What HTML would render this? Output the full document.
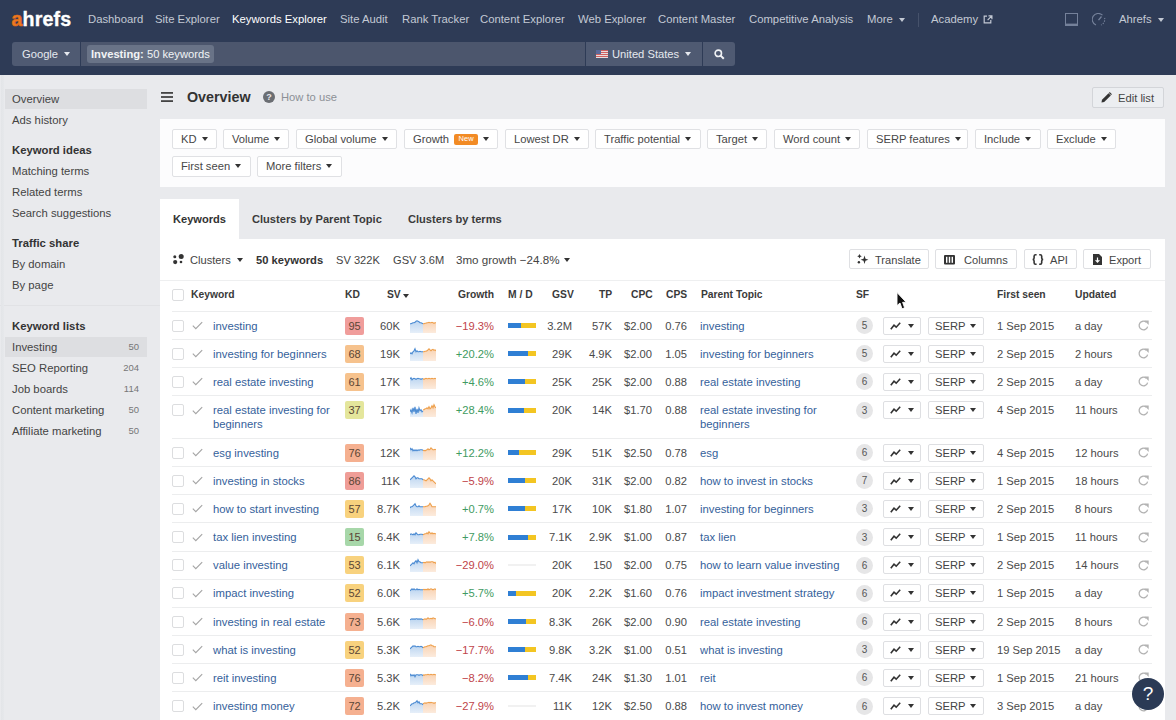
<!DOCTYPE html><html><head><meta charset="utf-8"><style>
*{box-sizing:border-box;margin:0;padding:0}
html,body{width:1176px;height:720px;overflow:hidden}
body{position:relative;background:#e9eaed;font-family:"Liberation Sans",sans-serif;font-size:11.2px;color:#333}
.a{position:absolute;white-space:nowrap}
.ni{position:absolute;top:12.3px;font-size:11.3px;color:#c3c9d4;line-height:14px;white-space:nowrap}
.sb{position:absolute;background:#4f5a72}
.sd{position:absolute;white-space:nowrap;font-size:11.3px;color:#444;line-height:14px;left:12px}
.sd.h{font-weight:bold;color:#333}
.cnt{position:absolute;font-size:9.5px;color:#777;text-align:right;width:40px;left:99px;line-height:14px}
.fb{position:absolute;height:20.6px;border:1px solid #e0e1e4;background:#fff;border-radius:2px;font-size:11.2px;color:#474747;line-height:19.4px;padding-left:8px;white-space:nowrap}
.tri{display:inline-block;width:0;height:0;border-left:3px solid transparent;border-right:3px solid transparent;border-top:4px solid #333;vertical-align:middle;margin-left:5px;position:relative;top:-1px}
.tb{position:absolute;height:20px;border:1px solid #dfe0e3;background:#fff;border-radius:2px;font-size:11.2px;color:#444;line-height:18px;white-space:nowrap}
.th{position:absolute;top:289px;font-size:10.3px;font-weight:bold;color:#3a3a3a;line-height:12px;white-space:nowrap}
.sep{position:absolute;left:172px;width:980px;height:1px;background:#ecedee}
.cb{position:absolute;left:172px;width:12px;height:12px;border:1px solid #dcdddf;border-radius:2px;background:#fff}
.ck{position:absolute;left:192px;width:11px;height:9px}
.kw{position:absolute;left:213px;color:#35619b;font-size:11.3px;line-height:14.2px;white-space:nowrap}
.kd{position:absolute;left:345px;width:19px;height:18px;border-radius:2px;text-align:center;font-size:11px;line-height:18px;color:#5b4636}
.r{position:absolute;text-align:right;font-size:11.2px;color:#4a4a4a;line-height:14px;white-space:nowrap}
.sp{position:absolute;left:410px;width:26px;height:14px}
.md{position:absolute;left:508px;width:28px;height:5px;background:#f3c522}
.md i{position:absolute;left:0;top:0;height:5px;background:#2f7fd4}
.pt{position:absolute;left:700px;color:#35619b;font-size:11.3px;line-height:14.2px;white-space:nowrap}
.sf{position:absolute;left:856px;width:17px;height:17px;border-radius:50%;background:#e6e6e7;text-align:center;font-size:10px;line-height:17px;color:#555}
.cbt{position:absolute;left:883px;width:38px;height:18px;border:1px solid #dedfe2;border-radius:2px;background:#fff}
.serp{position:absolute;left:928px;width:56px;height:18px;border:1px solid #dedfe2;border-radius:2px;background:#fff;font-size:11.2px;color:#444;line-height:16px;padding-left:6px;white-space:nowrap}
.fs{position:absolute;left:997px;font-size:11.2px;color:#4a4a4a;line-height:14px;white-space:nowrap}
.up{position:absolute;left:1075px;font-size:11.2px;color:#4a4a4a;line-height:14px;white-space:nowrap}
.rf{position:absolute;left:1138px;width:11px;height:11px}
</style></head><body>
<div class="a" style="left:0;top:0;width:1176px;height:75px;background:#2e3b56"></div>
<div class="a" style="left:11.5px;top:8px;font-size:19.6px;font-weight:bold;color:#ec7d1f;-webkit-text-stroke:0.7px #e0651c;line-height:22px;letter-spacing:-0.2px">a</div>
<div class="a" style="left:22.5px;top:8px;font-size:19.6px;font-weight:bold;color:#fff;-webkit-text-stroke:0.35px #fff;line-height:22px;letter-spacing:0.2px">hrefs</div>
<div class="ni" style="left:88px">Dashboard</div>
<div class="ni" style="left:155px">Site Explorer</div>
<div class="ni" style="left:232px;color:#fff">Keywords Explorer</div>
<div class="ni" style="left:340px">Site Audit</div>
<div class="ni" style="left:402px">Rank Tracker</div>
<div class="ni" style="left:480px">Content Explorer</div>
<div class="ni" style="left:578px">Web Explorer</div>
<div class="ni" style="left:658px">Content Master</div>
<div class="ni" style="left:749px">Competitive Analysis</div>
<div class="ni" style="left:867px">More</div>
<div class="ni" style="left:931px">Academy</div>
<div class="ni" style="left:1119px">Ahrefs</div>
<div class="a" style="left:899px;top:18px;width:0;height:0;border-left:3px solid transparent;border-right:3px solid transparent;border-top:4px solid #c3c9d4"></div>
<div class="a" style="left:1158px;top:18px;width:0;height:0;border-left:3px solid transparent;border-right:3px solid transparent;border-top:4px solid #c3c9d4"></div>
<div class="a" style="left:918px;top:13px;width:1px;height:14px;background:#46526b"></div>
<svg class="a" style="left:983px;top:15px" width="10" height="9" viewBox="0 0 10 9"><path d="M4 1.2H1.2v6.6h6.6V5" fill="none" stroke="#c3c9d4" stroke-width="1.2"/><path d="M5.5 0.8h3.4v3.4M8.8 0.9L4.6 5.1" fill="none" stroke="#c3c9d4" stroke-width="1.2"/></svg>
<svg class="a" style="left:1065px;top:13px" width="13" height="13" viewBox="0 0 13 13"><rect x="0.5" y="0.5" width="12" height="12" fill="none" stroke="#75819a" stroke-width="1"/><rect x="0.5" y="10.6" width="12" height="1.9" fill="#75819a"/></svg>
<svg class="a" style="left:1092px;top:13px" width="14" height="13" viewBox="0 0 14 13"><path d="M10.5 2.2A6 6 0 1 0 4 12" fill="none" stroke="#75819a" stroke-width="1.1"/><path d="M12.6 5A6 6 0 0 1 9 12" fill="none" stroke="#75819a" stroke-width="1.1" stroke-dasharray="1.2 1.3"/><path d="M6.5 7.2L9.5 3.5" stroke="#75819a" stroke-width="1.3"/></svg>
<div class="sb" style="left:12px;top:42px;width:68px;height:24px;border-radius:3px 0 0 3px"></div>
<div class="sb" style="left:81px;top:42px;width:504px;height:24px;background:#4c566d"></div>
<div class="sb" style="left:586px;top:42px;width:116px;height:24px"></div>
<div class="sb" style="left:703px;top:42px;width:32px;height:24px;border-radius:0 3px 3px 0"></div>
<div class="a" style="left:22px;top:47px;font-size:11.2px;color:#e6e9ef;line-height:14px">Google</div>
<div class="a" style="left:64px;top:52px;width:0;height:0;border-left:3px solid transparent;border-right:3px solid transparent;border-top:4px solid #e6e9ef"></div>
<div class="a" style="left:87px;top:45px;width:127px;height:18px;background:#697387;border-radius:3px"></div>
<div class="a" style="left:91px;top:47px;font-size:11.2px;color:#f1f3f6;line-height:14px"><b>Investing:</b> 50 keywords</div>
<svg class="a" style="left:596px;top:50px" width="12" height="8" viewBox="0 0 12 8"><rect width="12" height="8" fill="#e9dede"/><rect y="0" width="12" height="1" fill="#d06060"/><rect y="2" width="12" height="1" fill="#d06060"/><rect y="4" width="12" height="1" fill="#d06060"/><rect y="6" width="12" height="1" fill="#d06060"/><rect width="5" height="4" fill="#5a6a9a"/></svg>
<div class="a" style="left:612px;top:47px;font-size:11.2px;color:#e6e9ef;line-height:14px">United States</div>
<div class="a" style="left:685px;top:52px;width:0;height:0;border-left:3px solid transparent;border-right:3px solid transparent;border-top:4px solid #e6e9ef"></div>
<svg class="a" style="left:714px;top:49px" width="11" height="11" viewBox="0 0 11 11"><circle cx="4.3" cy="4.3" r="3.2" fill="none" stroke="#f0f2f5" stroke-width="1.6"/><path d="M6.6 6.6L9.8 9.8" stroke="#f0f2f5" stroke-width="2"/></svg>
<div class="a" style="left:5px;top:89px;width:142px;height:20px;background:#dddee1"></div>
<div class="a" style="left:5px;top:337px;width:142px;height:20px;background:#dddee1"></div>
<div class="sd" style="top:92px">Overview</div>
<div class="sd" style="top:113px">Ads history</div>
<div class="sd h" style="top:143px">Keyword ideas</div>
<div class="sd" style="top:164px">Matching terms</div>
<div class="sd" style="top:185px">Related terms</div>
<div class="sd" style="top:206px">Search suggestions</div>
<div class="sd h" style="top:236px">Traffic share</div>
<div class="sd" style="top:257px">By domain</div>
<div class="sd" style="top:278px">By page</div>
<div class="sd h" style="top:319px">Keyword lists</div>
<div class="sd" style="top:340px">Investing</div>
<div class="sd" style="top:361px">SEO Reporting</div>
<div class="sd" style="top:382px">Job boards</div>
<div class="sd" style="top:403px">Content marketing</div>
<div class="sd" style="top:424px">Affiliate marketing</div>
<div class="cnt" style="top:340px">50</div>
<div class="cnt" style="top:361px">204</div>
<div class="cnt" style="top:382px">114</div>
<div class="cnt" style="top:403px">50</div>
<div class="cnt" style="top:424px">50</div>
<div class="a" style="left:0;top:305px;width:160px;height:1px;background:#e1e2e5"></div>
<div class="a" style="left:1px;top:75px;width:3px;height:645px;background:linear-gradient(90deg,#e3e5e8,#e6e8eb)"></div>
<svg class="a" style="left:161px;top:92px" width="12" height="10" viewBox="0 0 12 10"><rect y="0" width="12" height="1.8" fill="#444"/><rect y="4.1" width="12" height="1.8" fill="#444"/><rect y="8.2" width="12" height="1.8" fill="#444"/></svg>
<div class="a" style="left:187px;top:89px;font-size:14.3px;font-weight:bold;color:#333;line-height:17px">Overview</div>
<div class="a" style="left:263px;top:91px;width:12px;height:12px;border-radius:50%;background:#6b6e73;color:#e9eaed;font-size:9px;font-weight:bold;text-align:center;line-height:12px">?</div>
<div class="a" style="left:281px;top:90px;font-size:11.2px;color:#8c9096;line-height:14px">How to use</div>
<div class="a" style="left:1092px;top:87px;width:72px;height:21px;border:1px solid #d3d5d9;border-radius:2px;background:#eceef1"></div>
<svg class="a" style="left:1101px;top:92px" width="11" height="11" viewBox="0 0 11 11"><path d="M0.5 10.5L1 7.8L7.6 1.2L9.8 3.4L3.2 10Z" fill="#333"/><path d="M8.3 0.5L10.5 2.7" stroke="#333" stroke-width="1.2"/></svg>
<div class="a" style="left:1118px;top:91px;font-size:11.2px;color:#444;line-height:14px">Edit list</div>
<div class="a" style="left:160px;top:119px;width:1005px;height:68px;background:#fcfcfd"></div>
<div class="fb" style="left:172px;top:128.7px;width:45px">KD<span class="tri"></span></div>
<div class="fb" style="left:223px;top:128.7px;width:66px">Volume<span class="tri"></span></div>
<div class="fb" style="left:296px;top:128.7px;width:101px">Global volume<span class="tri"></span></div>
<div class="fb" style="left:404px;top:128.7px;width:94px">Growth<span style="display:inline-block;width:24px;height:10.5px;margin-left:5px;background:#f28b25;color:#fff;font-size:7.5px;line-height:10.5px;text-align:center;border-radius:2px;vertical-align:1.5px">New</span><span class="tri"></span></div>
<div class="fb" style="left:505px;top:128.7px;width:84px">Lowest DR<span class="tri"></span></div>
<div class="fb" style="left:595px;top:128.7px;width:106px">Traffic potential<span class="tri"></span></div>
<div class="fb" style="left:707px;top:128.7px;width:60px">Target<span class="tri"></span></div>
<div class="fb" style="left:774px;top:128.7px;width:86px">Word count<span class="tri"></span></div>
<div class="fb" style="left:867px;top:128.7px;width:101px">SERP features<span class="tri"></span></div>
<div class="fb" style="left:975px;top:128.7px;width:66px">Include<span class="tri"></span></div>
<div class="fb" style="left:1047px;top:128.7px;width:69px">Exclude<span class="tri"></span></div>
<div class="fb" style="left:172px;top:156.2px;width:79px">First seen<span class="tri"></span></div>
<div class="fb" style="left:257px;top:156.2px;width:85px">More filters<span class="tri"></span></div>
<div class="a" style="left:160px;top:199px;width:79px;height:41px;background:#fff"></div>
<div class="a" style="left:173px;top:212px;font-size:11.1px;font-weight:bold;color:#333;line-height:14px">Keywords</div>
<div class="a" style="left:252px;top:212px;font-size:11.1px;font-weight:bold;color:#3b3b3b;line-height:14px">Clusters by Parent Topic</div>
<div class="a" style="left:408px;top:212px;font-size:11.1px;font-weight:bold;color:#3b3b3b;line-height:14px">Clusters by terms</div>
<div class="a" style="left:160px;top:239px;width:1005px;height:481px;background:#fff"></div>
<svg class="a" style="left:173px;top:254px" width="11" height="11" viewBox="0 0 11 11"><circle cx="1.8" cy="2.7" r="1.5" fill="#333"/><circle cx="8.2" cy="2.6" r="2.5" fill="#333"/><circle cx="2.2" cy="8.1" r="2.1" fill="#333"/><circle cx="8.0" cy="8.0" r="1.3" fill="#333"/></svg>
<div class="a" style="left:190px;top:253px;font-size:11.1px;color:#444;line-height:14px">Clusters</div>
<div class="a" style="left:237px;top:258px;width:0;height:0;border-left:3px solid transparent;border-right:3px solid transparent;border-top:4px solid #333"></div>
<div class="a" style="left:256px;top:253px;font-size:11.2px;font-weight:bold;color:#333;line-height:14px">50 keywords</div>
<div class="a" style="left:336px;top:253px;font-size:11.1px;color:#444;line-height:14px">SV 322K</div>
<div class="a" style="left:393px;top:253px;font-size:11.1px;color:#444;line-height:14px">GSV 3.6M</div>
<div class="a" style="left:456px;top:253px;font-size:11.6px;color:#444;line-height:14px">3mo growth −24.8%</div>
<div class="a" style="left:564px;top:258px;width:0;height:0;border-left:3px solid transparent;border-right:3px solid transparent;border-top:4px solid #333"></div>
<div class="tb" style="left:849px;top:249px;width:80px"></div>
<div class="a" style="left:875px;top:253px;font-size:11.1px;color:#444;line-height:14px">Translate</div>
<div class="tb" style="left:935px;top:249px;width:82px"></div>
<div class="a" style="left:964px;top:253px;font-size:11.1px;color:#444;line-height:14px">Columns</div>
<div class="tb" style="left:1024px;top:249px;width:53px"></div>
<div class="a" style="left:1050px;top:253px;font-size:11.1px;color:#444;line-height:14px">API</div>
<div class="tb" style="left:1083px;top:249px;width:68px"></div>
<div class="a" style="left:1109px;top:253px;font-size:11.1px;color:#444;line-height:14px">Export</div>
<svg class="a" style="left:857px;top:254px" width="13" height="12" viewBox="0 0 13 12"><path d="M2.50 -0.05 L3.25 1.50 L4.80 2.25 L3.25 3.00 L2.50 4.55 L1.75 3.00 L0.20 2.25 L1.75 1.50 Z" fill="#333"/><path d="M7.50 1.40 L8.50 4.70 L11.40 5.70 L8.50 6.70 L7.50 10.00 L6.50 6.70 L3.60 5.70 L6.50 4.70 Z" fill="#333"/><circle cx="1.9" cy="8.2" r="1.2" fill="#333"/></svg>
<svg class="a" style="left:944px;top:254.5px" width="11" height="10" viewBox="0 0 11 10"><rect x="0" y="0" width="11" height="9.5" rx="1" fill="#333"/><rect x="2" y="1.8" width="1.4" height="6" fill="#fff"/><rect x="4.8" y="1.8" width="1.4" height="6" fill="#fff"/><rect x="7.6" y="1.8" width="1.4" height="6" fill="#fff"/></svg>
<svg class="a" style="left:1032px;top:254px" width="12" height="11" viewBox="0 0 12 11"><path d="M4.6 0.8H3.6Q2.1 0.8 2.1 2.3V4Q2.1 5.5 0.6 5.5Q2.1 5.5 2.1 7V8.7Q2.1 10.2 3.6 10.2H4.6M7.2 0.8H8.2Q9.7 0.8 9.7 2.3V4Q9.7 5.5 11.2 5.5Q9.7 5.5 9.7 7V8.7Q9.7 10.2 8.2 10.2H7.2" fill="none" stroke="#333" stroke-width="1.6"/></svg>
<svg class="a" style="left:1093px;top:254px" width="9" height="11" viewBox="0 0 9 11"><path d="M0 0H6L9 3V11H0Z" fill="#333"/><path d="M4.5 3.5V8M2.6 6.2L4.5 8.2L6.4 6.2" fill="none" stroke="#fff" stroke-width="1.2"/></svg>
<div class="sep" style="top:280px;left:160px;width:1005px;background:#eeeff0"></div>
<div class="cb" style="top:289px"></div>
<div class="th" style="left:191px">Keyword</div>
<div class="th" style="left:345px">KD</div>
<div class="th" style="left:387px">SV</div>
<div class="th" style="left:458px">Growth</div>
<div class="th" style="left:508px">M / D</div>
<div class="th" style="left:552px">GSV</div>
<div class="th" style="left:599px">TP</div>
<div class="th" style="left:631px">CPC</div>
<div class="th" style="left:666px">CPS</div>
<div class="th" style="left:701px">Parent Topic</div>
<div class="th" style="left:856px">SF</div>
<div class="th" style="left:997px">First seen</div>
<div class="th" style="left:1075px">Updated</div>
<div class="a" style="left:403px;top:294px;width:0;height:0;border-left:3px solid transparent;border-right:3px solid transparent;border-top:4px solid #333"></div>
<div class="sep" style="top:311px"></div>
<svg width="0" height="0" style="position:absolute"><defs><linearGradient id="gb" x1="0" y1="0" x2="0" y2="1"><stop offset="0" stop-color="#bcd5f0"/><stop offset="1" stop-color="#e6eff9"/></linearGradient><linearGradient id="go" x1="0" y1="0" x2="0" y2="1"><stop offset="0" stop-color="#f9d3b3"/><stop offset="1" stop-color="#fcebdd"/></linearGradient></defs></svg>
<div class="cb" style="top:319.6px"></div>
<svg class="ck" style="top:321.1px" viewBox="0 0 11 9"><path d="M0.8 4.6L3.8 7.6L10.2 1.2" fill="none" stroke="#a5a5a5" stroke-width="1.15"/></svg>
<div class="kw" style="top:318.6px">investing</div>
<div class="kd" style="top:316.6px;background:#f09d9b">95</div>
<div class="r" style="left:360px;width:40px;top:318.6px">60K</div>
<svg class="sp" style="top:318.6px" width="26" height="14" viewBox="0 0 26 14"><path d="M0.0 4.8 L1.0 4.8 L2.0 4.3 L3.0 3.8 L4.0 3.8 L5.0 3.3 L6.0 2.3 L7.0 1.8 L8.0 2.3 L9.0 2.8 L10.0 3.8 L11.0 3.8 L12.0 4.3 L13.0 4.8 L13.0 14 L0.0 14Z" fill="url(#gb)"/><path d="M13.0 4.8 L14.0 4.8 L15.0 4.3 L16.0 4.3 L17.0 3.8 L18.0 3.8 L19.0 3.3 L20.0 3.8 L21.0 3.8 L22.0 3.3 L23.0 3.8 L24.0 4.3 L25.0 3.8 L26.0 3.8 L26.0 14 L13.0 14Z" fill="url(#go)"/><path d="M0.0 4.8 L1.0 4.8 L2.0 4.3 L3.0 3.8 L4.0 3.8 L5.0 3.3 L6.0 2.3 L7.0 1.8 L8.0 2.3 L9.0 2.8 L10.0 3.8 L11.0 3.8 L12.0 4.3 L13.0 4.8" fill="none" stroke="#4a8ad2" stroke-width="1.1"/><path d="M13.0 4.8 L14.0 4.8 L15.0 4.3 L16.0 4.3 L17.0 3.8 L18.0 3.8 L19.0 3.3 L20.0 3.8 L21.0 3.8 L22.0 3.3 L23.0 3.8 L24.0 4.3 L25.0 3.8 L26.0 3.8" fill="none" stroke="#eea04c" stroke-width="1.1"/></svg>
<div class="r" style="left:440px;width:54px;top:318.6px;color:#c0444a">−19.3%</div>
<div class="md" style="top:323.1px"><i style="width:13.2px"></i></div>
<div class="r" style="left:532px;width:40px;top:318.6px">3.2M</div>
<div class="r" style="left:572px;width:40px;top:318.6px">57K</div>
<div class="r" style="left:612px;width:40px;top:318.6px">$2.00</div>
<div class="r" style="left:647px;width:40px;top:318.6px">0.76</div>
<div class="pt" style="top:318.6px">investing</div>
<div class="sf" style="top:317.1px">5</div>
<div class="cbt" style="top:316.6px"><svg style="position:absolute;left:6px;top:4px" width="11" height="8" viewBox="0 0 11 8"><path d="M0.8 7.2L4 3.2L6.2 5.2L10.2 0.8" fill="none" stroke="#333" stroke-width="1.6"/></svg><div style="position:absolute;left:24px;top:6px;width:0;height:0;border-left:3px solid transparent;border-right:3px solid transparent;border-top:4px solid #333"></div></div>
<div class="serp" style="top:316.6px">SERP<div style="position:absolute;left:41px;top:6px;width:0;height:0;border-left:3px solid transparent;border-right:3px solid transparent;border-top:4px solid #333"></div></div>
<div class="fs" style="top:318.6px">1 Sep 2015</div>
<div class="up" style="top:318.6px">a day</div>
<svg class="rf" style="top:320.1px" viewBox="0 0 11 11"><path d="M9.6 6.6A4.3 4.3 0 1 1 8.3 2.3" fill="none" stroke="#b3b3b3" stroke-width="1.3"/><path d="M6.3 0.6L10.7 0.6L10.7 5Z" fill="#b3b3b3"/></svg>
<div class="sep" style="top:339.0px"></div>
<div class="cb" style="top:347.8px"></div>
<svg class="ck" style="top:349.3px" viewBox="0 0 11 9"><path d="M0.8 4.6L3.8 7.6L10.2 1.2" fill="none" stroke="#a5a5a5" stroke-width="1.15"/></svg>
<div class="kw" style="top:346.8px">investing for beginners</div>
<div class="kd" style="top:344.8px;background:#f6c28d">68</div>
<div class="r" style="left:360px;width:40px;top:346.8px">19K</div>
<svg class="sp" style="top:346.8px" width="26" height="14" viewBox="0 0 26 14"><path d="M0.0 6.8 L1.0 5.8 L2.0 6.8 L3.0 4.8 L4.0 3.8 L5.0 1.8 L6.0 4.8 L7.0 3.8 L8.0 4.8 L9.0 4.8 L10.0 4.3 L11.0 4.8 L12.0 4.8 L13.0 4.8 L13.0 14 L0.0 14Z" fill="url(#gb)"/><path d="M13.0 4.8 L14.0 4.8 L15.0 4.3 L16.0 4.3 L17.0 3.8 L18.0 2.8 L19.0 1.8 L20.0 2.8 L21.0 3.8 L22.0 2.8 L23.0 2.3 L24.0 3.3 L25.0 2.8 L26.0 3.8 L26.0 14 L13.0 14Z" fill="url(#go)"/><path d="M0.0 6.8 L1.0 5.8 L2.0 6.8 L3.0 4.8 L4.0 3.8 L5.0 1.8 L6.0 4.8 L7.0 3.8 L8.0 4.8 L9.0 4.8 L10.0 4.3 L11.0 4.8 L12.0 4.8 L13.0 4.8" fill="none" stroke="#4a8ad2" stroke-width="1.1"/><path d="M13.0 4.8 L14.0 4.8 L15.0 4.3 L16.0 4.3 L17.0 3.8 L18.0 2.8 L19.0 1.8 L20.0 2.8 L21.0 3.8 L22.0 2.8 L23.0 2.3 L24.0 3.3 L25.0 2.8 L26.0 3.8" fill="none" stroke="#eea04c" stroke-width="1.1"/></svg>
<div class="r" style="left:440px;width:54px;top:346.8px;color:#3f9b62">+20.2%</div>
<div class="md" style="top:351.3px"><i style="width:20.4px"></i></div>
<div class="r" style="left:532px;width:40px;top:346.8px">29K</div>
<div class="r" style="left:572px;width:40px;top:346.8px">4.9K</div>
<div class="r" style="left:612px;width:40px;top:346.8px">$2.00</div>
<div class="r" style="left:647px;width:40px;top:346.8px">1.05</div>
<div class="pt" style="top:346.8px">investing for beginners</div>
<div class="sf" style="top:345.3px">5</div>
<div class="cbt" style="top:344.8px"><svg style="position:absolute;left:6px;top:4px" width="11" height="8" viewBox="0 0 11 8"><path d="M0.8 7.2L4 3.2L6.2 5.2L10.2 0.8" fill="none" stroke="#333" stroke-width="1.6"/></svg><div style="position:absolute;left:24px;top:6px;width:0;height:0;border-left:3px solid transparent;border-right:3px solid transparent;border-top:4px solid #333"></div></div>
<div class="serp" style="top:344.8px">SERP<div style="position:absolute;left:41px;top:6px;width:0;height:0;border-left:3px solid transparent;border-right:3px solid transparent;border-top:4px solid #333"></div></div>
<div class="fs" style="top:346.8px">2 Sep 2015</div>
<div class="up" style="top:346.8px">2 hours</div>
<svg class="rf" style="top:348.3px" viewBox="0 0 11 11"><path d="M9.6 6.6A4.3 4.3 0 1 1 8.3 2.3" fill="none" stroke="#b3b3b3" stroke-width="1.3"/><path d="M6.3 0.6L10.7 0.6L10.7 5Z" fill="#b3b3b3"/></svg>
<div class="sep" style="top:367.1px"></div>
<div class="cb" style="top:375.9px"></div>
<svg class="ck" style="top:377.4px" viewBox="0 0 11 9"><path d="M0.8 4.6L3.8 7.6L10.2 1.2" fill="none" stroke="#a5a5a5" stroke-width="1.15"/></svg>
<div class="kw" style="top:374.9px">real estate investing</div>
<div class="kd" style="top:372.9px;background:#f6c28d">61</div>
<div class="r" style="left:360px;width:40px;top:374.9px">17K</div>
<svg class="sp" style="top:374.9px" width="26" height="14" viewBox="0 0 26 14"><path d="M0.0 3.8 L1.0 2.8 L2.0 4.8 L3.0 3.8 L4.0 3.3 L5.0 3.8 L6.0 4.3 L7.0 3.8 L8.0 3.3 L9.0 3.8 L10.0 3.8 L11.0 4.3 L12.0 3.8 L13.0 3.8 L13.0 14 L0.0 14Z" fill="url(#gb)"/><path d="M13.0 3.8 L14.0 4.3 L15.0 3.8 L16.0 3.3 L17.0 3.8 L18.0 3.8 L19.0 3.3 L20.0 3.8 L21.0 3.8 L22.0 3.3 L23.0 3.8 L24.0 3.8 L25.0 3.3 L26.0 3.8 L26.0 14 L13.0 14Z" fill="url(#go)"/><path d="M0.0 3.8 L1.0 2.8 L2.0 4.8 L3.0 3.8 L4.0 3.3 L5.0 3.8 L6.0 4.3 L7.0 3.8 L8.0 3.3 L9.0 3.8 L10.0 3.8 L11.0 4.3 L12.0 3.8 L13.0 3.8" fill="none" stroke="#4a8ad2" stroke-width="1.1"/><path d="M13.0 3.8 L14.0 4.3 L15.0 3.8 L16.0 3.3 L17.0 3.8 L18.0 3.8 L19.0 3.3 L20.0 3.8 L21.0 3.8 L22.0 3.3 L23.0 3.8 L24.0 3.8 L25.0 3.3 L26.0 3.8" fill="none" stroke="#eea04c" stroke-width="1.1"/></svg>
<div class="r" style="left:440px;width:54px;top:374.9px;color:#3f9b62">+4.6%</div>
<div class="md" style="top:379.4px"><i style="width:16.8px"></i></div>
<div class="r" style="left:532px;width:40px;top:374.9px">25K</div>
<div class="r" style="left:572px;width:40px;top:374.9px">25K</div>
<div class="r" style="left:612px;width:40px;top:374.9px">$2.00</div>
<div class="r" style="left:647px;width:40px;top:374.9px">0.88</div>
<div class="pt" style="top:374.9px">real estate investing</div>
<div class="sf" style="top:373.4px">6</div>
<div class="cbt" style="top:372.9px"><svg style="position:absolute;left:6px;top:4px" width="11" height="8" viewBox="0 0 11 8"><path d="M0.8 7.2L4 3.2L6.2 5.2L10.2 0.8" fill="none" stroke="#333" stroke-width="1.6"/></svg><div style="position:absolute;left:24px;top:6px;width:0;height:0;border-left:3px solid transparent;border-right:3px solid transparent;border-top:4px solid #333"></div></div>
<div class="serp" style="top:372.9px">SERP<div style="position:absolute;left:41px;top:6px;width:0;height:0;border-left:3px solid transparent;border-right:3px solid transparent;border-top:4px solid #333"></div></div>
<div class="fs" style="top:374.9px">2 Sep 2015</div>
<div class="up" style="top:374.9px">a day</div>
<svg class="rf" style="top:376.4px" viewBox="0 0 11 11"><path d="M9.6 6.6A4.3 4.3 0 1 1 8.3 2.3" fill="none" stroke="#b3b3b3" stroke-width="1.3"/><path d="M6.3 0.6L10.7 0.6L10.7 5Z" fill="#b3b3b3"/></svg>
<div class="sep" style="top:395.3px"></div>
<div class="cb" style="top:404.1px"></div>
<svg class="ck" style="top:405.6px" viewBox="0 0 11 9"><path d="M0.8 4.6L3.8 7.6L10.2 1.2" fill="none" stroke="#a5a5a5" stroke-width="1.15"/></svg>
<div class="kw" style="top:403.1px">real estate investing for<br>beginners</div>
<div class="kd" style="top:401.1px;background:#e4e69c">37</div>
<div class="r" style="left:360px;width:40px;top:403.1px">17K</div>
<svg class="sp" style="top:403.1px" width="26" height="14" viewBox="0 0 26 14"><path d="M0.0 8.8 L1.0 6.8 L2.0 9.8 L3.0 4.8 L4.0 8.8 L5.0 3.8 L6.0 10.8 L7.0 5.8 L8.0 9.8 L9.0 4.8 L10.0 7.8 L11.0 6.8 L12.0 8.8 L13.0 7.8 L13.0 14 L0.0 14Z" fill="url(#gb)"/><path d="M13.0 6.8 L14.0 6.8 L15.0 5.8 L16.0 5.8 L17.0 4.8 L18.0 5.8 L19.0 3.8 L20.0 5.8 L21.0 4.8 L22.0 2.8 L23.0 4.8 L24.0 1.8 L25.0 3.8 L26.0 4.8 L26.0 14 L13.0 14Z" fill="url(#go)"/><path d="M0.0 8.8 L1.0 6.8 L2.0 9.8 L3.0 4.8 L4.0 8.8 L5.0 3.8 L6.0 10.8 L7.0 5.8 L8.0 9.8 L9.0 4.8 L10.0 7.8 L11.0 6.8 L12.0 8.8 L13.0 7.8" fill="none" stroke="#4a8ad2" stroke-width="1.1"/><path d="M13.0 6.8 L14.0 6.8 L15.0 5.8 L16.0 5.8 L17.0 4.8 L18.0 5.8 L19.0 3.8 L20.0 5.8 L21.0 4.8 L22.0 2.8 L23.0 4.8 L24.0 1.8 L25.0 3.8 L26.0 4.8" fill="none" stroke="#eea04c" stroke-width="1.1"/></svg>
<div class="r" style="left:440px;width:54px;top:403.1px;color:#3f9b62">+28.4%</div>
<div class="md" style="top:407.6px"><i style="width:16.0px"></i></div>
<div class="r" style="left:532px;width:40px;top:403.1px">20K</div>
<div class="r" style="left:572px;width:40px;top:403.1px">14K</div>
<div class="r" style="left:612px;width:40px;top:403.1px">$1.70</div>
<div class="r" style="left:647px;width:40px;top:403.1px">0.88</div>
<div class="pt" style="top:403.1px">real estate investing for<br>beginners</div>
<div class="sf" style="top:401.6px">3</div>
<div class="cbt" style="top:401.1px"><svg style="position:absolute;left:6px;top:4px" width="11" height="8" viewBox="0 0 11 8"><path d="M0.8 7.2L4 3.2L6.2 5.2L10.2 0.8" fill="none" stroke="#333" stroke-width="1.6"/></svg><div style="position:absolute;left:24px;top:6px;width:0;height:0;border-left:3px solid transparent;border-right:3px solid transparent;border-top:4px solid #333"></div></div>
<div class="serp" style="top:401.1px">SERP<div style="position:absolute;left:41px;top:6px;width:0;height:0;border-left:3px solid transparent;border-right:3px solid transparent;border-top:4px solid #333"></div></div>
<div class="fs" style="top:403.1px">4 Sep 2015</div>
<div class="up" style="top:403.1px">11 hours</div>
<svg class="rf" style="top:404.6px" viewBox="0 0 11 11"><path d="M9.6 6.6A4.3 4.3 0 1 1 8.3 2.3" fill="none" stroke="#b3b3b3" stroke-width="1.3"/><path d="M6.3 0.6L10.7 0.6L10.7 5Z" fill="#b3b3b3"/></svg>
<div class="sep" style="top:437.8px"></div>
<div class="cb" style="top:446.6px"></div>
<svg class="ck" style="top:448.1px" viewBox="0 0 11 9"><path d="M0.8 4.6L3.8 7.6L10.2 1.2" fill="none" stroke="#a5a5a5" stroke-width="1.15"/></svg>
<div class="kw" style="top:445.6px">esg investing</div>
<div class="kd" style="top:443.6px;background:#f5b090">76</div>
<div class="r" style="left:360px;width:40px;top:445.6px">12K</div>
<svg class="sp" style="top:445.6px" width="26" height="14" viewBox="0 0 26 14"><path d="M0.0 1.8 L1.0 3.8 L2.0 2.8 L3.0 4.8 L4.0 3.8 L5.0 4.8 L6.0 3.8 L7.0 4.8 L8.0 3.8 L9.0 4.3 L10.0 3.8 L11.0 3.8 L12.0 3.8 L13.0 4.3 L13.0 14 L0.0 14Z" fill="url(#gb)"/><path d="M13.0 4.8 L14.0 4.3 L15.0 4.8 L16.0 4.3 L17.0 3.8 L18.0 2.8 L19.0 3.8 L20.0 3.3 L21.0 1.8 L22.0 2.8 L23.0 3.8 L24.0 3.8 L25.0 3.3 L26.0 3.8 L26.0 14 L13.0 14Z" fill="url(#go)"/><path d="M0.0 1.8 L1.0 3.8 L2.0 2.8 L3.0 4.8 L4.0 3.8 L5.0 4.8 L6.0 3.8 L7.0 4.8 L8.0 3.8 L9.0 4.3 L10.0 3.8 L11.0 3.8 L12.0 3.8 L13.0 4.3" fill="none" stroke="#4a8ad2" stroke-width="1.1"/><path d="M13.0 4.8 L14.0 4.3 L15.0 4.8 L16.0 4.3 L17.0 3.8 L18.0 2.8 L19.0 3.8 L20.0 3.3 L21.0 1.8 L22.0 2.8 L23.0 3.8 L24.0 3.8 L25.0 3.3 L26.0 3.8" fill="none" stroke="#eea04c" stroke-width="1.1"/></svg>
<div class="r" style="left:440px;width:54px;top:445.6px;color:#3f9b62">+12.2%</div>
<div class="md" style="top:450.1px"><i style="width:10.9px"></i></div>
<div class="r" style="left:532px;width:40px;top:445.6px">29K</div>
<div class="r" style="left:572px;width:40px;top:445.6px">51K</div>
<div class="r" style="left:612px;width:40px;top:445.6px">$2.50</div>
<div class="r" style="left:647px;width:40px;top:445.6px">0.78</div>
<div class="pt" style="top:445.6px">esg</div>
<div class="sf" style="top:444.1px">6</div>
<div class="cbt" style="top:443.6px"><svg style="position:absolute;left:6px;top:4px" width="11" height="8" viewBox="0 0 11 8"><path d="M0.8 7.2L4 3.2L6.2 5.2L10.2 0.8" fill="none" stroke="#333" stroke-width="1.6"/></svg><div style="position:absolute;left:24px;top:6px;width:0;height:0;border-left:3px solid transparent;border-right:3px solid transparent;border-top:4px solid #333"></div></div>
<div class="serp" style="top:443.6px">SERP<div style="position:absolute;left:41px;top:6px;width:0;height:0;border-left:3px solid transparent;border-right:3px solid transparent;border-top:4px solid #333"></div></div>
<div class="fs" style="top:445.6px">4 Sep 2015</div>
<div class="up" style="top:445.6px">12 hours</div>
<svg class="rf" style="top:447.1px" viewBox="0 0 11 11"><path d="M9.6 6.6A4.3 4.3 0 1 1 8.3 2.3" fill="none" stroke="#b3b3b3" stroke-width="1.3"/><path d="M6.3 0.6L10.7 0.6L10.7 5Z" fill="#b3b3b3"/></svg>
<div class="sep" style="top:466.0px"></div>
<div class="cb" style="top:474.7px"></div>
<svg class="ck" style="top:476.2px" viewBox="0 0 11 9"><path d="M0.8 4.6L3.8 7.6L10.2 1.2" fill="none" stroke="#a5a5a5" stroke-width="1.15"/></svg>
<div class="kw" style="top:473.7px">investing in stocks</div>
<div class="kd" style="top:471.7px;background:#ef9d97">86</div>
<div class="r" style="left:360px;width:40px;top:473.7px">11K</div>
<svg class="sp" style="top:473.7px" width="26" height="14" viewBox="0 0 26 14"><path d="M0.0 5.8 L1.0 4.8 L2.0 3.8 L3.0 2.8 L4.0 1.8 L5.0 2.8 L6.0 4.8 L7.0 3.8 L8.0 3.8 L9.0 4.8 L10.0 4.8 L11.0 4.8 L12.0 4.8 L13.0 5.8 L13.0 14 L0.0 14Z" fill="url(#gb)"/><path d="M13.0 5.8 L14.0 5.8 L15.0 6.3 L16.0 6.8 L17.0 5.8 L18.0 4.8 L19.0 3.8 L20.0 4.8 L21.0 6.8 L22.0 5.8 L23.0 6.8 L24.0 7.8 L25.0 8.8 L26.0 9.8 L26.0 14 L13.0 14Z" fill="url(#go)"/><path d="M0.0 5.8 L1.0 4.8 L2.0 3.8 L3.0 2.8 L4.0 1.8 L5.0 2.8 L6.0 4.8 L7.0 3.8 L8.0 3.8 L9.0 4.8 L10.0 4.8 L11.0 4.8 L12.0 4.8 L13.0 5.8" fill="none" stroke="#4a8ad2" stroke-width="1.1"/><path d="M13.0 5.8 L14.0 5.8 L15.0 6.3 L16.0 6.8 L17.0 5.8 L18.0 4.8 L19.0 3.8 L20.0 4.8 L21.0 6.8 L22.0 5.8 L23.0 6.8 L24.0 7.8 L25.0 8.8 L26.0 9.8" fill="none" stroke="#eea04c" stroke-width="1.1"/></svg>
<div class="r" style="left:440px;width:54px;top:473.7px;color:#c0444a">−5.9%</div>
<div class="md" style="top:478.2px"><i style="width:16.5px"></i></div>
<div class="r" style="left:532px;width:40px;top:473.7px">20K</div>
<div class="r" style="left:572px;width:40px;top:473.7px">31K</div>
<div class="r" style="left:612px;width:40px;top:473.7px">$2.00</div>
<div class="r" style="left:647px;width:40px;top:473.7px">0.82</div>
<div class="pt" style="top:473.7px">how to invest in stocks</div>
<div class="sf" style="top:472.2px">7</div>
<div class="cbt" style="top:471.7px"><svg style="position:absolute;left:6px;top:4px" width="11" height="8" viewBox="0 0 11 8"><path d="M0.8 7.2L4 3.2L6.2 5.2L10.2 0.8" fill="none" stroke="#333" stroke-width="1.6"/></svg><div style="position:absolute;left:24px;top:6px;width:0;height:0;border-left:3px solid transparent;border-right:3px solid transparent;border-top:4px solid #333"></div></div>
<div class="serp" style="top:471.7px">SERP<div style="position:absolute;left:41px;top:6px;width:0;height:0;border-left:3px solid transparent;border-right:3px solid transparent;border-top:4px solid #333"></div></div>
<div class="fs" style="top:473.7px">1 Sep 2015</div>
<div class="up" style="top:473.7px">18 hours</div>
<svg class="rf" style="top:475.2px" viewBox="0 0 11 11"><path d="M9.6 6.6A4.3 4.3 0 1 1 8.3 2.3" fill="none" stroke="#b3b3b3" stroke-width="1.3"/><path d="M6.3 0.6L10.7 0.6L10.7 5Z" fill="#b3b3b3"/></svg>
<div class="sep" style="top:494.1px"></div>
<div class="cb" style="top:502.9px"></div>
<svg class="ck" style="top:504.4px" viewBox="0 0 11 9"><path d="M0.8 4.6L3.8 7.6L10.2 1.2" fill="none" stroke="#a5a5a5" stroke-width="1.15"/></svg>
<div class="kw" style="top:501.9px">how to start investing</div>
<div class="kd" style="top:499.9px;background:#f8d27e">57</div>
<div class="r" style="left:360px;width:40px;top:501.9px">8.7K</div>
<svg class="sp" style="top:501.9px" width="26" height="14" viewBox="0 0 26 14"><path d="M0.0 5.8 L1.0 4.8 L2.0 4.8 L3.0 3.8 L4.0 2.8 L5.0 1.8 L6.0 3.8 L7.0 4.8 L8.0 4.8 L9.0 3.8 L10.0 4.8 L11.0 4.8 L12.0 4.8 L13.0 4.8 L13.0 14 L0.0 14Z" fill="url(#gb)"/><path d="M13.0 4.8 L14.0 4.8 L15.0 4.8 L16.0 4.3 L17.0 4.3 L18.0 3.8 L19.0 2.8 L20.0 1.3 L21.0 2.8 L22.0 4.8 L23.0 4.8 L24.0 4.8 L25.0 4.8 L26.0 4.8 L26.0 14 L13.0 14Z" fill="url(#go)"/><path d="M0.0 5.8 L1.0 4.8 L2.0 4.8 L3.0 3.8 L4.0 2.8 L5.0 1.8 L6.0 3.8 L7.0 4.8 L8.0 4.8 L9.0 3.8 L10.0 4.8 L11.0 4.8 L12.0 4.8 L13.0 4.8" fill="none" stroke="#4a8ad2" stroke-width="1.1"/><path d="M13.0 4.8 L14.0 4.8 L15.0 4.8 L16.0 4.3 L17.0 4.3 L18.0 3.8 L19.0 2.8 L20.0 1.3 L21.0 2.8 L22.0 4.8 L23.0 4.8 L24.0 4.8 L25.0 4.8 L26.0 4.8" fill="none" stroke="#eea04c" stroke-width="1.1"/></svg>
<div class="r" style="left:440px;width:54px;top:501.9px;color:#3f9b62">+0.7%</div>
<div class="md" style="top:506.4px"><i style="width:16.5px"></i></div>
<div class="r" style="left:532px;width:40px;top:501.9px">17K</div>
<div class="r" style="left:572px;width:40px;top:501.9px">10K</div>
<div class="r" style="left:612px;width:40px;top:501.9px">$1.80</div>
<div class="r" style="left:647px;width:40px;top:501.9px">1.07</div>
<div class="pt" style="top:501.9px">investing for beginners</div>
<div class="sf" style="top:500.4px">3</div>
<div class="cbt" style="top:499.9px"><svg style="position:absolute;left:6px;top:4px" width="11" height="8" viewBox="0 0 11 8"><path d="M0.8 7.2L4 3.2L6.2 5.2L10.2 0.8" fill="none" stroke="#333" stroke-width="1.6"/></svg><div style="position:absolute;left:24px;top:6px;width:0;height:0;border-left:3px solid transparent;border-right:3px solid transparent;border-top:4px solid #333"></div></div>
<div class="serp" style="top:499.9px">SERP<div style="position:absolute;left:41px;top:6px;width:0;height:0;border-left:3px solid transparent;border-right:3px solid transparent;border-top:4px solid #333"></div></div>
<div class="fs" style="top:501.9px">2 Sep 2015</div>
<div class="up" style="top:501.9px">8 hours</div>
<svg class="rf" style="top:503.4px" viewBox="0 0 11 11"><path d="M9.6 6.6A4.3 4.3 0 1 1 8.3 2.3" fill="none" stroke="#b3b3b3" stroke-width="1.3"/><path d="M6.3 0.6L10.7 0.6L10.7 5Z" fill="#b3b3b3"/></svg>
<div class="sep" style="top:522.3px"></div>
<div class="cb" style="top:531.1px"></div>
<svg class="ck" style="top:532.6px" viewBox="0 0 11 9"><path d="M0.8 4.6L3.8 7.6L10.2 1.2" fill="none" stroke="#a5a5a5" stroke-width="1.15"/></svg>
<div class="kw" style="top:530.1px">tax lien investing</div>
<div class="kd" style="top:528.1px;background:#a7d7a9">15</div>
<div class="r" style="left:360px;width:40px;top:530.1px">6.4K</div>
<svg class="sp" style="top:530.1px" width="26" height="14" viewBox="0 0 26 14"><path d="M0.0 4.8 L1.0 3.8 L2.0 4.3 L3.0 4.8 L4.0 3.8 L5.0 4.8 L6.0 2.8 L7.0 3.8 L8.0 4.8 L9.0 4.8 L10.0 4.3 L11.0 4.3 L12.0 4.3 L13.0 4.8 L13.0 14 L0.0 14Z" fill="url(#gb)"/><path d="M13.0 4.8 L14.0 4.3 L15.0 3.8 L16.0 3.8 L17.0 2.8 L18.0 3.8 L19.0 1.8 L20.0 2.8 L21.0 3.8 L22.0 2.8 L23.0 3.8 L24.0 3.3 L25.0 3.8 L26.0 3.8 L26.0 14 L13.0 14Z" fill="url(#go)"/><path d="M0.0 4.8 L1.0 3.8 L2.0 4.3 L3.0 4.8 L4.0 3.8 L5.0 4.8 L6.0 2.8 L7.0 3.8 L8.0 4.8 L9.0 4.8 L10.0 4.3 L11.0 4.3 L12.0 4.3 L13.0 4.8" fill="none" stroke="#4a8ad2" stroke-width="1.1"/><path d="M13.0 4.8 L14.0 4.3 L15.0 3.8 L16.0 3.8 L17.0 2.8 L18.0 3.8 L19.0 1.8 L20.0 2.8 L21.0 3.8 L22.0 2.8 L23.0 3.8 L24.0 3.3 L25.0 3.8 L26.0 3.8" fill="none" stroke="#eea04c" stroke-width="1.1"/></svg>
<div class="r" style="left:440px;width:54px;top:530.1px;color:#3f9b62">+7.8%</div>
<div class="md" style="top:534.6px"><i style="width:20.4px"></i></div>
<div class="r" style="left:532px;width:40px;top:530.1px">7.1K</div>
<div class="r" style="left:572px;width:40px;top:530.1px">2.9K</div>
<div class="r" style="left:612px;width:40px;top:530.1px">$1.00</div>
<div class="r" style="left:647px;width:40px;top:530.1px">0.87</div>
<div class="pt" style="top:530.1px">tax lien</div>
<div class="sf" style="top:528.6px">3</div>
<div class="cbt" style="top:528.1px"><svg style="position:absolute;left:6px;top:4px" width="11" height="8" viewBox="0 0 11 8"><path d="M0.8 7.2L4 3.2L6.2 5.2L10.2 0.8" fill="none" stroke="#333" stroke-width="1.6"/></svg><div style="position:absolute;left:24px;top:6px;width:0;height:0;border-left:3px solid transparent;border-right:3px solid transparent;border-top:4px solid #333"></div></div>
<div class="serp" style="top:528.1px">SERP<div style="position:absolute;left:41px;top:6px;width:0;height:0;border-left:3px solid transparent;border-right:3px solid transparent;border-top:4px solid #333"></div></div>
<div class="fs" style="top:530.1px">1 Sep 2015</div>
<div class="up" style="top:530.1px">11 hours</div>
<svg class="rf" style="top:531.6px" viewBox="0 0 11 11"><path d="M9.6 6.6A4.3 4.3 0 1 1 8.3 2.3" fill="none" stroke="#b3b3b3" stroke-width="1.3"/><path d="M6.3 0.6L10.7 0.6L10.7 5Z" fill="#b3b3b3"/></svg>
<div class="sep" style="top:550.5px"></div>
<div class="cb" style="top:559.2px"></div>
<svg class="ck" style="top:560.7px" viewBox="0 0 11 9"><path d="M0.8 4.6L3.8 7.6L10.2 1.2" fill="none" stroke="#a5a5a5" stroke-width="1.15"/></svg>
<div class="kw" style="top:558.2px">value investing</div>
<div class="kd" style="top:556.2px;background:#f8d27e">53</div>
<div class="r" style="left:360px;width:40px;top:558.2px">6.1K</div>
<svg class="sp" style="top:558.2px" width="26" height="14" viewBox="0 0 26 14"><path d="M0.0 7.8 L1.0 6.8 L2.0 5.8 L3.0 4.8 L4.0 5.8 L5.0 3.8 L6.0 2.8 L7.0 4.8 L8.0 1.8 L9.0 3.8 L10.0 3.8 L11.0 4.8 L12.0 4.8 L13.0 4.8 L13.0 14 L0.0 14Z" fill="url(#gb)"/><path d="M13.0 4.8 L14.0 4.3 L15.0 4.8 L16.0 4.3 L17.0 3.8 L18.0 4.3 L19.0 3.8 L20.0 4.3 L21.0 3.8 L22.0 3.8 L23.0 3.8 L24.0 4.8 L25.0 4.3 L26.0 5.8 L26.0 14 L13.0 14Z" fill="url(#go)"/><path d="M0.0 7.8 L1.0 6.8 L2.0 5.8 L3.0 4.8 L4.0 5.8 L5.0 3.8 L6.0 2.8 L7.0 4.8 L8.0 1.8 L9.0 3.8 L10.0 3.8 L11.0 4.8 L12.0 4.8 L13.0 4.8" fill="none" stroke="#4a8ad2" stroke-width="1.1"/><path d="M13.0 4.8 L14.0 4.3 L15.0 4.8 L16.0 4.3 L17.0 3.8 L18.0 4.3 L19.0 3.8 L20.0 4.3 L21.0 3.8 L22.0 3.8 L23.0 3.8 L24.0 4.8 L25.0 4.3 L26.0 5.8" fill="none" stroke="#eea04c" stroke-width="1.1"/></svg>
<div class="r" style="left:440px;width:54px;top:558.2px;color:#c0444a">−29.0%</div>
<div class="a" style="left:508px;top:564.2px;width:28px;height:2px;background:#f1f1f1"></div>
<div class="r" style="left:532px;width:40px;top:558.2px">20K</div>
<div class="r" style="left:572px;width:40px;top:558.2px">150</div>
<div class="r" style="left:612px;width:40px;top:558.2px">$2.00</div>
<div class="r" style="left:647px;width:40px;top:558.2px">0.75</div>
<div class="pt" style="top:558.2px">how to learn value investing</div>
<div class="sf" style="top:556.7px">6</div>
<div class="cbt" style="top:556.2px"><svg style="position:absolute;left:6px;top:4px" width="11" height="8" viewBox="0 0 11 8"><path d="M0.8 7.2L4 3.2L6.2 5.2L10.2 0.8" fill="none" stroke="#333" stroke-width="1.6"/></svg><div style="position:absolute;left:24px;top:6px;width:0;height:0;border-left:3px solid transparent;border-right:3px solid transparent;border-top:4px solid #333"></div></div>
<div class="serp" style="top:556.2px">SERP<div style="position:absolute;left:41px;top:6px;width:0;height:0;border-left:3px solid transparent;border-right:3px solid transparent;border-top:4px solid #333"></div></div>
<div class="fs" style="top:558.2px">2 Sep 2015</div>
<div class="up" style="top:558.2px">14 hours</div>
<svg class="rf" style="top:559.7px" viewBox="0 0 11 11"><path d="M9.6 6.6A4.3 4.3 0 1 1 8.3 2.3" fill="none" stroke="#b3b3b3" stroke-width="1.3"/><path d="M6.3 0.6L10.7 0.6L10.7 5Z" fill="#b3b3b3"/></svg>
<div class="sep" style="top:578.6px"></div>
<div class="cb" style="top:587.4px"></div>
<svg class="ck" style="top:588.9px" viewBox="0 0 11 9"><path d="M0.8 4.6L3.8 7.6L10.2 1.2" fill="none" stroke="#a5a5a5" stroke-width="1.15"/></svg>
<div class="kw" style="top:586.4px">impact investing</div>
<div class="kd" style="top:584.4px;background:#f8d27e">52</div>
<div class="r" style="left:360px;width:40px;top:586.4px">6.0K</div>
<svg class="sp" style="top:586.4px" width="26" height="14" viewBox="0 0 26 14"><path d="M0.0 4.8 L1.0 3.8 L2.0 2.8 L3.0 3.8 L4.0 2.8 L5.0 3.8 L6.0 3.8 L7.0 2.8 L8.0 3.8 L9.0 3.3 L10.0 3.8 L11.0 3.8 L12.0 3.8 L13.0 3.8 L13.0 14 L0.0 14Z" fill="url(#gb)"/><path d="M13.0 3.8 L14.0 3.3 L15.0 3.8 L16.0 3.3 L17.0 3.8 L18.0 2.8 L19.0 3.8 L20.0 3.3 L21.0 2.8 L22.0 3.3 L23.0 3.8 L24.0 3.3 L25.0 2.8 L26.0 3.8 L26.0 14 L13.0 14Z" fill="url(#go)"/><path d="M0.0 4.8 L1.0 3.8 L2.0 2.8 L3.0 3.8 L4.0 2.8 L5.0 3.8 L6.0 3.8 L7.0 2.8 L8.0 3.8 L9.0 3.3 L10.0 3.8 L11.0 3.8 L12.0 3.8 L13.0 3.8" fill="none" stroke="#4a8ad2" stroke-width="1.1"/><path d="M13.0 3.8 L14.0 3.3 L15.0 3.8 L16.0 3.3 L17.0 3.8 L18.0 2.8 L19.0 3.8 L20.0 3.3 L21.0 2.8 L22.0 3.3 L23.0 3.8 L24.0 3.3 L25.0 2.8 L26.0 3.8" fill="none" stroke="#eea04c" stroke-width="1.1"/></svg>
<div class="r" style="left:440px;width:54px;top:586.4px;color:#3f9b62">+5.7%</div>
<div class="md" style="top:590.9px"><i style="width:8.4px"></i></div>
<div class="r" style="left:532px;width:40px;top:586.4px">20K</div>
<div class="r" style="left:572px;width:40px;top:586.4px">2.2K</div>
<div class="r" style="left:612px;width:40px;top:586.4px">$1.60</div>
<div class="r" style="left:647px;width:40px;top:586.4px">0.76</div>
<div class="pt" style="top:586.4px">impact investment strategy</div>
<div class="sf" style="top:584.9px">6</div>
<div class="cbt" style="top:584.4px"><svg style="position:absolute;left:6px;top:4px" width="11" height="8" viewBox="0 0 11 8"><path d="M0.8 7.2L4 3.2L6.2 5.2L10.2 0.8" fill="none" stroke="#333" stroke-width="1.6"/></svg><div style="position:absolute;left:24px;top:6px;width:0;height:0;border-left:3px solid transparent;border-right:3px solid transparent;border-top:4px solid #333"></div></div>
<div class="serp" style="top:584.4px">SERP<div style="position:absolute;left:41px;top:6px;width:0;height:0;border-left:3px solid transparent;border-right:3px solid transparent;border-top:4px solid #333"></div></div>
<div class="fs" style="top:586.4px">1 Sep 2015</div>
<div class="up" style="top:586.4px">a day</div>
<svg class="rf" style="top:587.9px" viewBox="0 0 11 11"><path d="M9.6 6.6A4.3 4.3 0 1 1 8.3 2.3" fill="none" stroke="#b3b3b3" stroke-width="1.3"/><path d="M6.3 0.6L10.7 0.6L10.7 5Z" fill="#b3b3b3"/></svg>
<div class="sep" style="top:606.8px"></div>
<div class="cb" style="top:615.6px"></div>
<svg class="ck" style="top:617.1px" viewBox="0 0 11 9"><path d="M0.8 4.6L3.8 7.6L10.2 1.2" fill="none" stroke="#a5a5a5" stroke-width="1.15"/></svg>
<div class="kw" style="top:614.6px">investing in real estate</div>
<div class="kd" style="top:612.6px;background:#f5b090">73</div>
<div class="r" style="left:360px;width:40px;top:614.6px">5.6K</div>
<svg class="sp" style="top:614.6px" width="26" height="14" viewBox="0 0 26 14"><path d="M0.0 4.8 L1.0 4.3 L2.0 3.8 L3.0 4.3 L4.0 3.8 L5.0 4.3 L6.0 3.8 L7.0 3.8 L8.0 4.3 L9.0 3.8 L10.0 4.3 L11.0 3.8 L12.0 4.3 L13.0 4.8 L13.0 14 L0.0 14Z" fill="url(#gb)"/><path d="M13.0 4.8 L14.0 4.3 L15.0 3.8 L16.0 4.3 L17.0 3.8 L18.0 2.8 L19.0 3.8 L20.0 3.8 L21.0 3.3 L22.0 3.8 L23.0 2.8 L24.0 3.3 L25.0 3.8 L26.0 3.8 L26.0 14 L13.0 14Z" fill="url(#go)"/><path d="M0.0 4.8 L1.0 4.3 L2.0 3.8 L3.0 4.3 L4.0 3.8 L5.0 4.3 L6.0 3.8 L7.0 3.8 L8.0 4.3 L9.0 3.8 L10.0 4.3 L11.0 3.8 L12.0 4.3 L13.0 4.8" fill="none" stroke="#4a8ad2" stroke-width="1.1"/><path d="M13.0 4.8 L14.0 4.3 L15.0 3.8 L16.0 4.3 L17.0 3.8 L18.0 2.8 L19.0 3.8 L20.0 3.8 L21.0 3.3 L22.0 3.8 L23.0 2.8 L24.0 3.3 L25.0 3.8 L26.0 3.8" fill="none" stroke="#eea04c" stroke-width="1.1"/></svg>
<div class="r" style="left:440px;width:54px;top:614.6px;color:#c0444a">−6.0%</div>
<div class="md" style="top:619.1px"><i style="width:17.6px"></i></div>
<div class="r" style="left:532px;width:40px;top:614.6px">8.3K</div>
<div class="r" style="left:572px;width:40px;top:614.6px">26K</div>
<div class="r" style="left:612px;width:40px;top:614.6px">$2.00</div>
<div class="r" style="left:647px;width:40px;top:614.6px">0.90</div>
<div class="pt" style="top:614.6px">real estate investing</div>
<div class="sf" style="top:613.1px">6</div>
<div class="cbt" style="top:612.6px"><svg style="position:absolute;left:6px;top:4px" width="11" height="8" viewBox="0 0 11 8"><path d="M0.8 7.2L4 3.2L6.2 5.2L10.2 0.8" fill="none" stroke="#333" stroke-width="1.6"/></svg><div style="position:absolute;left:24px;top:6px;width:0;height:0;border-left:3px solid transparent;border-right:3px solid transparent;border-top:4px solid #333"></div></div>
<div class="serp" style="top:612.6px">SERP<div style="position:absolute;left:41px;top:6px;width:0;height:0;border-left:3px solid transparent;border-right:3px solid transparent;border-top:4px solid #333"></div></div>
<div class="fs" style="top:614.6px">2 Sep 2015</div>
<div class="up" style="top:614.6px">8 hours</div>
<svg class="rf" style="top:616.1px" viewBox="0 0 11 11"><path d="M9.6 6.6A4.3 4.3 0 1 1 8.3 2.3" fill="none" stroke="#b3b3b3" stroke-width="1.3"/><path d="M6.3 0.6L10.7 0.6L10.7 5Z" fill="#b3b3b3"/></svg>
<div class="sep" style="top:635.0px"></div>
<div class="cb" style="top:643.8px"></div>
<svg class="ck" style="top:645.3px" viewBox="0 0 11 9"><path d="M0.8 4.6L3.8 7.6L10.2 1.2" fill="none" stroke="#a5a5a5" stroke-width="1.15"/></svg>
<div class="kw" style="top:642.8px">what is investing</div>
<div class="kd" style="top:640.8px;background:#f8d27e">52</div>
<div class="r" style="left:360px;width:40px;top:642.8px">5.3K</div>
<svg class="sp" style="top:642.8px" width="26" height="14" viewBox="0 0 26 14"><path d="M0.0 5.8 L1.0 4.8 L2.0 3.8 L3.0 2.8 L4.0 3.3 L5.0 2.8 L6.0 3.8 L7.0 3.8 L8.0 3.3 L9.0 3.8 L10.0 3.8 L11.0 3.3 L12.0 3.8 L13.0 4.8 L13.0 14 L0.0 14Z" fill="url(#gb)"/><path d="M13.0 4.8 L14.0 4.3 L15.0 3.8 L16.0 3.8 L17.0 3.3 L18.0 2.8 L19.0 2.8 L20.0 2.3 L21.0 1.8 L22.0 2.8 L23.0 2.8 L24.0 3.8 L25.0 3.8 L26.0 3.8 L26.0 14 L13.0 14Z" fill="url(#go)"/><path d="M0.0 5.8 L1.0 4.8 L2.0 3.8 L3.0 2.8 L4.0 3.3 L5.0 2.8 L6.0 3.8 L7.0 3.8 L8.0 3.3 L9.0 3.8 L10.0 3.8 L11.0 3.3 L12.0 3.8 L13.0 4.8" fill="none" stroke="#4a8ad2" stroke-width="1.1"/><path d="M13.0 4.8 L14.0 4.3 L15.0 3.8 L16.0 3.8 L17.0 3.3 L18.0 2.8 L19.0 2.8 L20.0 2.3 L21.0 1.8 L22.0 2.8 L23.0 2.8 L24.0 3.8 L25.0 3.8 L26.0 3.8" fill="none" stroke="#eea04c" stroke-width="1.1"/></svg>
<div class="r" style="left:440px;width:54px;top:642.8px;color:#c0444a">−17.7%</div>
<div class="md" style="top:647.3px"><i style="width:16.8px"></i></div>
<div class="r" style="left:532px;width:40px;top:642.8px">9.8K</div>
<div class="r" style="left:572px;width:40px;top:642.8px">3.2K</div>
<div class="r" style="left:612px;width:40px;top:642.8px">$1.00</div>
<div class="r" style="left:647px;width:40px;top:642.8px">0.51</div>
<div class="pt" style="top:642.8px">what is investing</div>
<div class="sf" style="top:641.3px">3</div>
<div class="cbt" style="top:640.8px"><svg style="position:absolute;left:6px;top:4px" width="11" height="8" viewBox="0 0 11 8"><path d="M0.8 7.2L4 3.2L6.2 5.2L10.2 0.8" fill="none" stroke="#333" stroke-width="1.6"/></svg><div style="position:absolute;left:24px;top:6px;width:0;height:0;border-left:3px solid transparent;border-right:3px solid transparent;border-top:4px solid #333"></div></div>
<div class="serp" style="top:640.8px">SERP<div style="position:absolute;left:41px;top:6px;width:0;height:0;border-left:3px solid transparent;border-right:3px solid transparent;border-top:4px solid #333"></div></div>
<div class="fs" style="top:642.8px">19 Sep 2015</div>
<div class="up" style="top:642.8px">a day</div>
<svg class="rf" style="top:644.3px" viewBox="0 0 11 11"><path d="M9.6 6.6A4.3 4.3 0 1 1 8.3 2.3" fill="none" stroke="#b3b3b3" stroke-width="1.3"/><path d="M6.3 0.6L10.7 0.6L10.7 5Z" fill="#b3b3b3"/></svg>
<div class="sep" style="top:663.1px"></div>
<div class="cb" style="top:671.9px"></div>
<svg class="ck" style="top:673.4px" viewBox="0 0 11 9"><path d="M0.8 4.6L3.8 7.6L10.2 1.2" fill="none" stroke="#a5a5a5" stroke-width="1.15"/></svg>
<div class="kw" style="top:670.9px">reit investing</div>
<div class="kd" style="top:668.9px;background:#f5b090">76</div>
<div class="r" style="left:360px;width:40px;top:670.9px">5.3K</div>
<svg class="sp" style="top:670.9px" width="26" height="14" viewBox="0 0 26 14"><path d="M0.0 2.8 L1.0 4.8 L2.0 3.8 L3.0 4.8 L4.0 3.8 L5.0 5.8 L6.0 3.8 L7.0 3.8 L8.0 3.8 L9.0 4.3 L10.0 3.8 L11.0 3.8 L12.0 3.8 L13.0 4.8 L13.0 14 L0.0 14Z" fill="url(#gb)"/><path d="M13.0 3.8 L14.0 4.3 L15.0 3.8 L16.0 3.8 L17.0 3.8 L18.0 3.3 L19.0 3.8 L20.0 3.8 L21.0 3.3 L22.0 3.8 L23.0 3.8 L24.0 3.3 L25.0 3.8 L26.0 3.8 L26.0 14 L13.0 14Z" fill="url(#go)"/><path d="M0.0 2.8 L1.0 4.8 L2.0 3.8 L3.0 4.8 L4.0 3.8 L5.0 5.8 L6.0 3.8 L7.0 3.8 L8.0 3.8 L9.0 4.3 L10.0 3.8 L11.0 3.8 L12.0 3.8 L13.0 4.8" fill="none" stroke="#4a8ad2" stroke-width="1.1"/><path d="M13.0 3.8 L14.0 4.3 L15.0 3.8 L16.0 3.8 L17.0 3.8 L18.0 3.3 L19.0 3.8 L20.0 3.8 L21.0 3.3 L22.0 3.8 L23.0 3.8 L24.0 3.3 L25.0 3.8 L26.0 3.8" fill="none" stroke="#eea04c" stroke-width="1.1"/></svg>
<div class="r" style="left:440px;width:54px;top:670.9px;color:#c0444a">−8.2%</div>
<div class="md" style="top:675.4px"><i style="width:20.4px"></i></div>
<div class="r" style="left:532px;width:40px;top:670.9px">7.4K</div>
<div class="r" style="left:572px;width:40px;top:670.9px">24K</div>
<div class="r" style="left:612px;width:40px;top:670.9px">$1.30</div>
<div class="r" style="left:647px;width:40px;top:670.9px">1.01</div>
<div class="pt" style="top:670.9px">reit</div>
<div class="sf" style="top:669.4px">6</div>
<div class="cbt" style="top:668.9px"><svg style="position:absolute;left:6px;top:4px" width="11" height="8" viewBox="0 0 11 8"><path d="M0.8 7.2L4 3.2L6.2 5.2L10.2 0.8" fill="none" stroke="#333" stroke-width="1.6"/></svg><div style="position:absolute;left:24px;top:6px;width:0;height:0;border-left:3px solid transparent;border-right:3px solid transparent;border-top:4px solid #333"></div></div>
<div class="serp" style="top:668.9px">SERP<div style="position:absolute;left:41px;top:6px;width:0;height:0;border-left:3px solid transparent;border-right:3px solid transparent;border-top:4px solid #333"></div></div>
<div class="fs" style="top:670.9px">1 Sep 2015</div>
<div class="up" style="top:670.9px">21 hours</div>
<svg class="rf" style="top:672.4px" viewBox="0 0 11 11"><path d="M9.6 6.6A4.3 4.3 0 1 1 8.3 2.3" fill="none" stroke="#b3b3b3" stroke-width="1.3"/><path d="M6.3 0.6L10.7 0.6L10.7 5Z" fill="#b3b3b3"/></svg>
<div class="sep" style="top:691.3px"></div>
<div class="cb" style="top:700.1px"></div>
<svg class="ck" style="top:701.6px" viewBox="0 0 11 9"><path d="M0.8 4.6L3.8 7.6L10.2 1.2" fill="none" stroke="#a5a5a5" stroke-width="1.15"/></svg>
<div class="kw" style="top:699.1px">investing money</div>
<div class="kd" style="top:697.1px;background:#f5b090">72</div>
<div class="r" style="left:360px;width:40px;top:699.1px">5.2K</div>
<svg class="sp" style="top:699.1px" width="26" height="14" viewBox="0 0 26 14"><path d="M0.0 6.8 L1.0 5.8 L2.0 4.8 L3.0 4.8 L4.0 3.8 L5.0 3.8 L6.0 2.8 L7.0 1.8 L8.0 3.8 L9.0 2.8 L10.0 4.8 L11.0 4.8 L12.0 4.8 L13.0 5.8 L13.0 14 L0.0 14Z" fill="url(#gb)"/><path d="M13.0 4.8 L14.0 4.3 L15.0 3.8 L16.0 4.3 L17.0 3.8 L18.0 3.8 L19.0 3.3 L20.0 3.8 L21.0 3.3 L22.0 3.8 L23.0 3.8 L24.0 4.3 L25.0 3.8 L26.0 3.8 L26.0 14 L13.0 14Z" fill="url(#go)"/><path d="M0.0 6.8 L1.0 5.8 L2.0 4.8 L3.0 4.8 L4.0 3.8 L5.0 3.8 L6.0 2.8 L7.0 1.8 L8.0 3.8 L9.0 2.8 L10.0 4.8 L11.0 4.8 L12.0 4.8 L13.0 5.8" fill="none" stroke="#4a8ad2" stroke-width="1.1"/><path d="M13.0 4.8 L14.0 4.3 L15.0 3.8 L16.0 4.3 L17.0 3.8 L18.0 3.8 L19.0 3.3 L20.0 3.8 L21.0 3.3 L22.0 3.8 L23.0 3.8 L24.0 4.3 L25.0 3.8 L26.0 3.8" fill="none" stroke="#eea04c" stroke-width="1.1"/></svg>
<div class="r" style="left:440px;width:54px;top:699.1px;color:#c0444a">−27.9%</div>
<div class="a" style="left:508px;top:705.1px;width:28px;height:2px;background:#f1f1f1"></div>
<div class="r" style="left:532px;width:40px;top:699.1px">11K</div>
<div class="r" style="left:572px;width:40px;top:699.1px">12K</div>
<div class="r" style="left:612px;width:40px;top:699.1px">$2.50</div>
<div class="r" style="left:647px;width:40px;top:699.1px">0.88</div>
<div class="pt" style="top:699.1px">how to invest money</div>
<div class="sf" style="top:697.6px">6</div>
<div class="cbt" style="top:697.1px"><svg style="position:absolute;left:6px;top:4px" width="11" height="8" viewBox="0 0 11 8"><path d="M0.8 7.2L4 3.2L6.2 5.2L10.2 0.8" fill="none" stroke="#333" stroke-width="1.6"/></svg><div style="position:absolute;left:24px;top:6px;width:0;height:0;border-left:3px solid transparent;border-right:3px solid transparent;border-top:4px solid #333"></div></div>
<div class="serp" style="top:697.1px">SERP<div style="position:absolute;left:41px;top:6px;width:0;height:0;border-left:3px solid transparent;border-right:3px solid transparent;border-top:4px solid #333"></div></div>
<div class="fs" style="top:699.1px">3 Sep 2015</div>
<div class="up" style="top:699.1px">a day</div>
<svg class="rf" style="top:700.6px" viewBox="0 0 11 11"><path d="M9.6 6.6A4.3 4.3 0 1 1 8.3 2.3" fill="none" stroke="#b3b3b3" stroke-width="1.3"/><path d="M6.3 0.6L10.7 0.6L10.7 5Z" fill="#b3b3b3"/></svg>
<div class="sep" style="top:719.5px"></div>
<div class="a" style="left:1132px;top:677.5px;width:32px;height:32px;border-radius:50%;background:#2b3a55;color:#fff;font-size:19px;text-align:center;line-height:32px">?</div>
<svg class="a" style="left:894px;top:290px" width="16" height="21" viewBox="0 0 16 21"><path d="M3 2.5L3 15.6L6 13L8 18.8L10.6 17.8L8.6 12.3L12.2 12.3Z" fill="#111" stroke="#fff" stroke-width="0.9" stroke-linejoin="round"/></svg>
</body></html>
